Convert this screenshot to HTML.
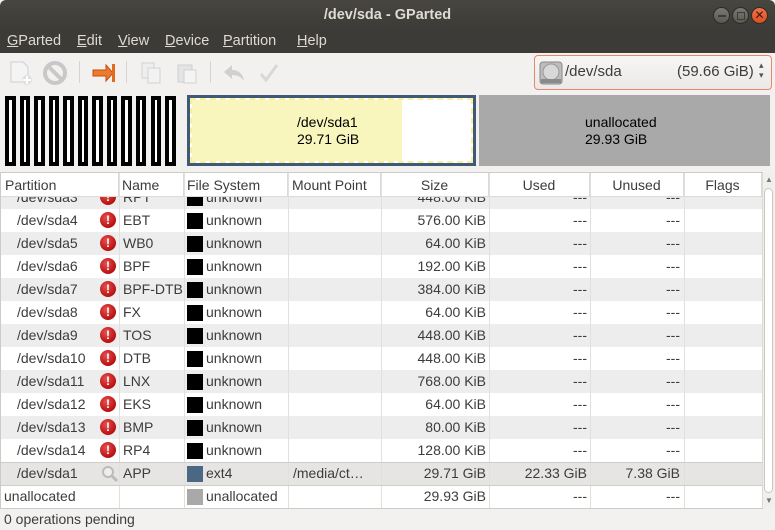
<!DOCTYPE html>
<html><head><meta charset="utf-8"><style>
*{margin:0;padding:0;box-sizing:border-box}
body{width:775px;height:530px;overflow:hidden;background:#f2f1f0;font-family:"Liberation Sans","DejaVu Sans",sans-serif;font-size:14px;color:#3c3c3c;position:relative}
.abs{position:absolute}
#title{left:0;top:0;width:775px;height:30px;background:linear-gradient(#47463f,#3c3b37);color:#dfdbd2;font-weight:bold;text-align:center;line-height:30px;font-size:14.5px;border-radius:6px 6px 0 0}
#menu{left:0;top:30px;width:775px;height:23px;background:#3c3b37;color:#dfdbd2;font-size:14.5px}
#menu span{position:absolute;top:3px}
.wb{position:absolute;top:7px;width:17px;height:17px;border-radius:50%;background:linear-gradient(#7a7971,#5a5953);border:1px solid #2d2c28}
#tb{left:0;top:53px;width:775px;height:39px;background:#f2f1f0}
.sep{position:absolute;top:8px;width:1px;height:22px;background:#d6d4d0}
#combo{left:534px;top:55px;width:238px;height:35px;border:1px solid #e8866a;border-radius:4px;background:linear-gradient(#f7f6f5,#ebe9e7)}
.cell{position:absolute;height:23px;line-height:23px;white-space:nowrap;overflow:hidden}
.hdr{position:absolute;top:173px;height:24px;line-height:24px;border-right:1px solid #dcdad5;color:#3c3c3c;background:#fff}
.row{position:absolute;left:1px;width:761px;height:23px}
.err{position:absolute;top:3px;width:16px;height:16px;border-radius:50%;background:radial-gradient(circle at 40% 35%,#e85050,#b81010 70%,#8c0c0c);color:#fff;font-size:12px;font-weight:bold;text-align:center;line-height:16px}
.sw{position:absolute;top:4px;width:16px;height:16px;background:#000}
.vl{position:absolute;top:173px;width:1px;height:335px;background:#e2e0dc}
.bx{position:absolute;top:96px;width:10.5px;height:70px;border:4px solid #000;background:#fff}
</style></head><body>
<div id="title" class="abs">/dev/sda - GParted</div>
<div class="wb" style="left:713px"><div style="position:absolute;left:4px;top:7px;width:8px;height:2px;background:#3c3b37"></div></div>
<div class="wb" style="left:732px"><div style="position:absolute;left:4px;top:4px;width:8px;height:8px;border:1.5px solid #3c3b37"></div></div>
<div class="wb" style="left:751px;background:linear-gradient(#f4724a,#d8501e);color:#3c1a0c;text-align:center;line-height:15px;font-size:12px">✕</div>
<div id="menu" class="abs">
<span style="left:7px"><u>G</u>Parted</span><span style="left:77px"><u>E</u>dit</span><span style="left:118px"><u>V</u>iew</span><span style="left:165px"><u>D</u>evice</span><span style="left:223px"><u>P</u>artition</span><span style="left:297px"><u>H</u>elp</span>
</div>
<div id="tb" class="abs">
<svg class="abs" style="left:8px;top:7px" width="26" height="26"><path d="M3 2h12l5 5v15H3z" fill="#f4f4f4" stroke="#d0d0d0"/><circle cx="19" cy="20" r="5" fill="#e0e0e0"/><path d="M19 16v8M15 20h8" stroke="#fff" stroke-width="2"/></svg>
<svg class="abs" style="left:43px;top:8px" width="24" height="24"><circle cx="12" cy="12" r="10" fill="none" stroke="#c8c8c8" stroke-width="4"/><path d="M5 5l14 14" stroke="#c8c8c8" stroke-width="4"/></svg>
<div class="sep" style="left:79px"></div>
<svg class="abs" style="left:91px;top:9px" width="26" height="22"><path d="M2 8h13V3l7 8-7 8v-5H2z" fill="#ee7a2e" stroke="#c04f10"/><rect x="21" y="2" width="3" height="18" fill="#e06a20"/></svg>
<div class="sep" style="left:126px"></div>
<svg class="abs" style="left:140px;top:8px" width="22" height="24"><rect x="2" y="2" width="12" height="15" fill="#eee" stroke="#d2d2d2"/><rect x="8" y="7" width="12" height="15" fill="#f2f2f2" stroke="#d2d2d2"/></svg>
<svg class="abs" style="left:176px;top:8px" width="22" height="24"><rect x="2" y="4" width="14" height="17" fill="#e4e4e4" stroke="#cfcfcf"/><rect x="8" y="9" width="12" height="13" fill="#f4f4f4" stroke="#d2d2d2"/></svg>
<div class="sep" style="left:210px"></div>
<svg class="abs" style="left:222px;top:9px" width="24" height="22"><path d="M10 3L2 10l8 7v-4c6 0 9 2 12 6-1-7-5-11-12-11z" fill="#d0d0d0"/></svg>
<svg class="abs" style="left:258px;top:9px" width="22" height="22"><path d="M3 12l5 6L19 3" fill="none" stroke="#d8d8d8" stroke-width="3"/></svg>
</div>
<div id="combo" class="abs">
<svg class="abs" style="left:4px;top:5px" width="24" height="24"><rect x="1" y="1" width="22" height="22" rx="3" fill="#bdbdbd" stroke="#888"/><circle cx="12" cy="11" r="8" fill="#d8d8d8" stroke="#999"/><rect x="2" y="18" width="20" height="4" fill="#8a8a8a"/></svg>
<span class="abs" style="left:30px;top:7px;font-size:15px">/dev/sda</span>
<span class="abs" style="left:142px;top:7px;font-size:15px">(59.66 GiB)</span>
<span class="abs" style="left:224px;top:4px;font-size:9px;line-height:10px;color:#555">▴<br>▾</span>
</div>
<div id="boxes"></div>
<div class="abs" style="left:187px;top:95px;width:289px;height:71px;background:#3f5a77;padding:3px"><div style="width:100%;height:100%;border:2px dashed #f7f0a0;background:#fff;position:relative"><div style="position:absolute;left:0;top:0;width:210px;height:100%;background:#f8f6bd"></div></div></div>
<div class="abs" style="left:297px;top:114px;color:#000;line-height:17px">/dev/sda1<br>29.71 GiB</div>
<div class="abs" style="left:479px;top:95px;width:291px;height:71px;background:#a9a9a9"></div>
<div class="abs" style="left:585px;top:114px;color:#000;line-height:17px">unallocated<br>29.93 GiB</div>
<div class="abs" style="left:0;top:172px;width:763px;height:337px;background:#fff;border:1px solid #cdcbc6"></div>
<div id="rows"></div>
<div class="hdr" style="left:1px;width:118px;padding-left:4px">Partition</div>
<div class="hdr" style="left:119px;width:65px;padding-left:3px">Name</div>
<div class="hdr" style="left:184px;width:104px;padding-left:3px">File System</div>
<div class="hdr" style="left:288px;width:93px;padding-left:4px">Mount Point</div>
<div class="hdr" style="left:381px;width:108px;text-align:center">Size</div>
<div class="hdr" style="left:489px;width:101px;text-align:center">Used</div>
<div class="hdr" style="left:590px;width:94px;text-align:center">Unused</div>
<div class="hdr" style="left:684px;width:78px;text-align:center">Flags</div>
<div class="abs" style="left:1px;top:196px;width:761px;height:1px;background:#dcdad5"></div>
<div class="abs" style="left:762px;top:173px;width:12px;height:335px;background:#f0efed;border-left:1px solid #dcdad5"></div>
<div class="abs" style="left:764px;top:188px;width:9px;height:305px;border-radius:5px;background:#fff;border:1px solid #c9c7c2"></div>
<div class="abs" style="left:765px;top:175px;font-size:8px;color:#777">▲</div>
<div class="abs" style="left:765px;top:496px;font-size:8px;color:#777">▼</div>
<div class="abs" style="left:4px;top:511px;font-size:14px">0 operations pending</div>
<script>
var b="";for(var k=0;k<12;k++){b+='<div class="bx" style="left:'+(5+k*14.55)+'px"></div>';}
document.getElementById("boxes").innerHTML=b;
var d=[["/dev/sda3","RPT","448.00 KiB"],["/dev/sda4","EBT","576.00 KiB"],["/dev/sda5","WB0","64.00 KiB"],["/dev/sda6","BPF","192.00 KiB"],["/dev/sda7","BPF-DTB","384.00 KiB"],["/dev/sda8","FX","64.00 KiB"],["/dev/sda9","TOS","448.00 KiB"],["/dev/sda10","DTB","448.00 KiB"],["/dev/sda11","LNX","768.00 KiB"],["/dev/sda12","EKS","64.00 KiB"],["/dev/sda13","BMP","80.00 KiB"],["/dev/sda14","RP4","128.00 KiB"]];
var h="";
function row(i,bg,p,n,icon,sw,fs,mp,sz,u,un){var t=186+23*i;
h+='<div class="row" style="top:'+t+'px;background:'+bg+'"></div>';
h+='<div class="cell" style="left:'+(p=="unallocated"?4:17)+'px;top:'+t+'px">'+p+'</div>';
h+=icon;
h+='<div class="cell" style="left:123px;top:'+t+'px">'+n+'</div>';
h+='<div class="sw" style="left:187px;top:'+(t+4)+'px;background:'+sw+'"></div>';
h+='<div class="cell" style="left:206px;top:'+t+'px">'+fs+'</div>';
h+='<div class="cell" style="left:293px;top:'+t+'px">'+mp+'</div>';
h+='<div class="cell" style="left:381px;width:105px;text-align:right;top:'+t+'px">'+sz+'</div>';
h+='<div class="cell" style="left:489px;width:98px;text-align:right;top:'+t+'px">'+u+'</div>';
h+='<div class="cell" style="left:590px;width:90px;text-align:right;top:'+t+'px">'+un+'</div>';}
d.forEach(function(r,i){var t=186+23*i;row(i,i%2?"#fff":"#ededed",r[0],r[1],'<div class="err" style="left:100px;top:'+(t+3)+'px">!</div>',"#000","unknown","",r[2],"---","---");});
row(12,"#e6e5e3","/dev/sda1","APP",'<svg class="abs" style="left:101px;top:'+(186+23*12+3)+'px" width="18" height="18"><circle cx="7" cy="7" r="5" fill="#eee" stroke="#bbb" stroke-width="2"/><path d="M11 11l5 5" stroke="#bbb" stroke-width="3"/></svg>',"#4a6784","ext4","/media/ct…","29.71 GiB","22.33 GiB","7.38 GiB");
row(13,"#fff","unallocated","","","#a9a9a9","unallocated","","29.93 GiB","---","---");
document.getElementById("rows").innerHTML=h;
</script>
<div class="vl" style="left:119px"></div><div class="vl" style="left:184px"></div><div class="vl" style="left:288px"></div><div class="vl" style="left:381px"></div><div class="vl" style="left:489px"></div><div class="vl" style="left:590px"></div><div class="vl" style="left:684px"></div>
<div class="abs" style="left:1px;top:462px;width:761px;height:1px;background:#cfcdc8"></div>
<div class="abs" style="left:1px;top:485px;width:761px;height:1px;background:#cfcdc8"></div>
</body></html>
